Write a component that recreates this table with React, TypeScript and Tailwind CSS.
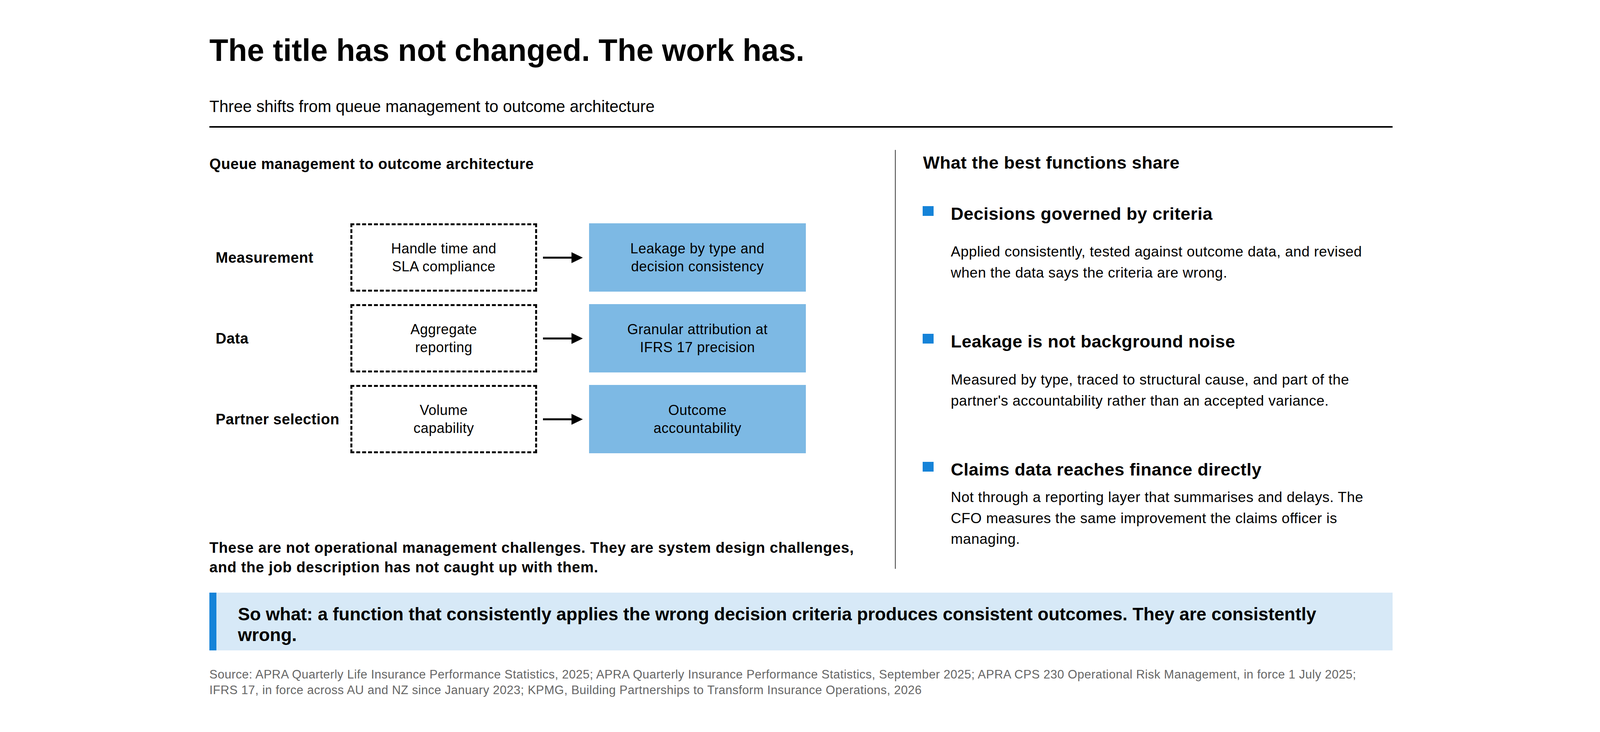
import React from "react";

const FONT = { fontFamily: '"Liberation Sans", Arial, Helvetica, sans-serif' };

function Arrow() {
  return (
    <svg width="102" height="30" viewBox="0 0 102 30" className="shrink-0">
      <line x1="0" y1="15" x2="76" y2="15" stroke="#000" strokeWidth="5" />
      <polygon points="73,1 102,15 73,29" fill="#000" />
    </svg>
  );
}

type Row = { label: string; from: [string, string]; to: [string, string] };

const rows: Row[] = [
  { label: "Measurement", from: ["Handle time and", "SLA compliance"], to: ["Leakage by type and", "decision consistency"] },
  { label: "Data", from: ["Aggregate", "reporting"], to: ["Granular attribution at", "IFRS 17 precision"] },
  { label: "Partner selection", from: ["Volume", "capability"], to: ["Outcome", "accountability"] },
];

type Bullet = { title: string; body: string[]; gap: string };

const bullets: Bullet[] = [
  {
    title: "Decisions governed by criteria",
    body: ["Applied consistently, tested against outcome data, and revised", "when the data says the criteria are wrong."],
    gap: "mt-[48px]",
  },
  {
    title: "Leakage is not background noise",
    body: ["Measured by type, traced to structural cause, and part of the", "partner's accountability rather than an accepted variance."],
    gap: "mt-[49px]",
  },
  {
    title: "Claims data reaches finance directly",
    body: [
      "Not through a reporting layer that summarises and delays. The",
      "CFO measures the same improvement the claims officer is",
      "managing.",
    ],
    gap: "mt-[22px]",
  },
];

export default function App() {
  return (
    <div className="w-[4100px] h-[1875px] bg-white text-black overflow-hidden" style={FONT}>
      <div className="ml-[536px] w-[3029px] pt-[89px] flex flex-col">
        {/* Title */}
        <h1 className="text-[79px] leading-[80px] font-bold whitespace-nowrap">
          The title has not changed. The work has.
        </h1>
        <p className="mt-[83px] text-[41.6px] leading-[42px] whitespace-nowrap">
          Three shifts from queue management to outcome architecture
        </p>
        <div className="mt-[29px] h-[4px] bg-black" />

        {/* Columns */}
        <div className="mt-[57px] flex items-start">
          {/* Left column */}
          <div className="w-[1755px] shrink-0 flex flex-col">
            <h2 className="mt-[17px] text-[38px] leading-[38px] font-bold tracking-[0.6px] whitespace-nowrap">
              Queue management to outcome architecture
            </h2>
            <div className="mt-[133px] flex flex-col gap-[32px]">
              {rows.map((r) => (
                <div key={r.label} className="flex items-center h-[175px]">
                  <div className="ml-[16px] w-[345px] shrink-0 text-[38px] leading-[46px] font-bold tracking-[0.5px] whitespace-nowrap">
                    {r.label}
                  </div>
                  <div className="w-[478px] h-[175px] shrink-0 border-[5px] border-dashed border-black flex items-center justify-center text-center text-[36px] leading-[46px] tracking-[0.5px] whitespace-nowrap">
                    <div>
                      {r.from[0]}
                      <br />
                      {r.from[1]}
                    </div>
                  </div>
                  <div className="ml-[15px] mr-[16px] flex items-center">
                    <Arrow />
                  </div>
                  <div className="w-[555px] h-[175px] shrink-0 bg-[#7db9e4] flex items-center justify-center text-center text-[36px] leading-[46px] tracking-[0.5px] whitespace-nowrap">
                    <div>
                      {r.to[0]}
                      <br />
                      {r.to[1]}
                    </div>
                  </div>
                </div>
              ))}
            </div>
            <p className="mt-[217px] text-[38px] leading-[50px] font-bold tracking-[0.8px] whitespace-nowrap">
              These are not operational management challenges. They are system design challenges,
              <br />
              and the job description has not caught up with them.
            </p>
          </div>

          {/* Right column */}
          <div className="flex-1 h-[1073px] border-l-2 border-[#3c3c3c] pl-[69px] flex flex-col">
            <h2 className="mt-[10px] ml-[1px] text-[45px] leading-[45px] font-bold tracking-[0.5px] whitespace-nowrap">
              What the best functions share
            </h2>
            <div className="mt-[86px] flex flex-col gap-[127px]">
              {bullets.map((b) => (
                <div key={b.title} className="flex items-start">
                  <div className="mt-[3px] w-[28px] h-[25px] shrink-0 bg-[#1583d8]" />
                  <div className="ml-[44px] flex flex-col">
                    <h3 className="text-[45px] leading-[45px] font-bold tracking-[0.5px] whitespace-nowrap">
                      {b.title}
                    </h3>
                    <p className={`${b.gap} text-[37px] leading-[53.5px] tracking-[0.5px] whitespace-nowrap`}>
                      {b.body.map((line, i) => (
                        <React.Fragment key={i}>
                          {line}
                          {i < b.body.length - 1 && <br />}
                        </React.Fragment>
                      ))}
                    </p>
                  </div>
                </div>
              ))}
            </div>
          </div>
        </div>

        {/* So what box */}
        <div className="mt-[40px] h-[148px] flex bg-[#d7e9f7]">
          <div className="w-[18px] shrink-0 bg-[#1583d8]" />
          <p className="pl-[55px] pt-[29px] text-[46px] leading-[53px] font-bold whitespace-nowrap">
            So what: a function that consistently applies the wrong decision criteria produces consistent outcomes. They are consistently
            <br />
            wrong.
          </p>
        </div>

        {/* Source */}
        <p className="mt-[42px] text-[31px] leading-[40px] tracking-[0.5px] text-[#666666] whitespace-nowrap">
          Source: APRA Quarterly Life Insurance Performance Statistics, 2025; APRA Quarterly Insurance Performance Statistics, September 2025; APRA CPS 230 Operational Risk Management, in force 1 July 2025;
          <br />
          IFRS 17, in force across AU and NZ since January 2023; KPMG, Building Partnerships to Transform Insurance Operations, 2026
        </p>
      </div>
    </div>
  );
}
